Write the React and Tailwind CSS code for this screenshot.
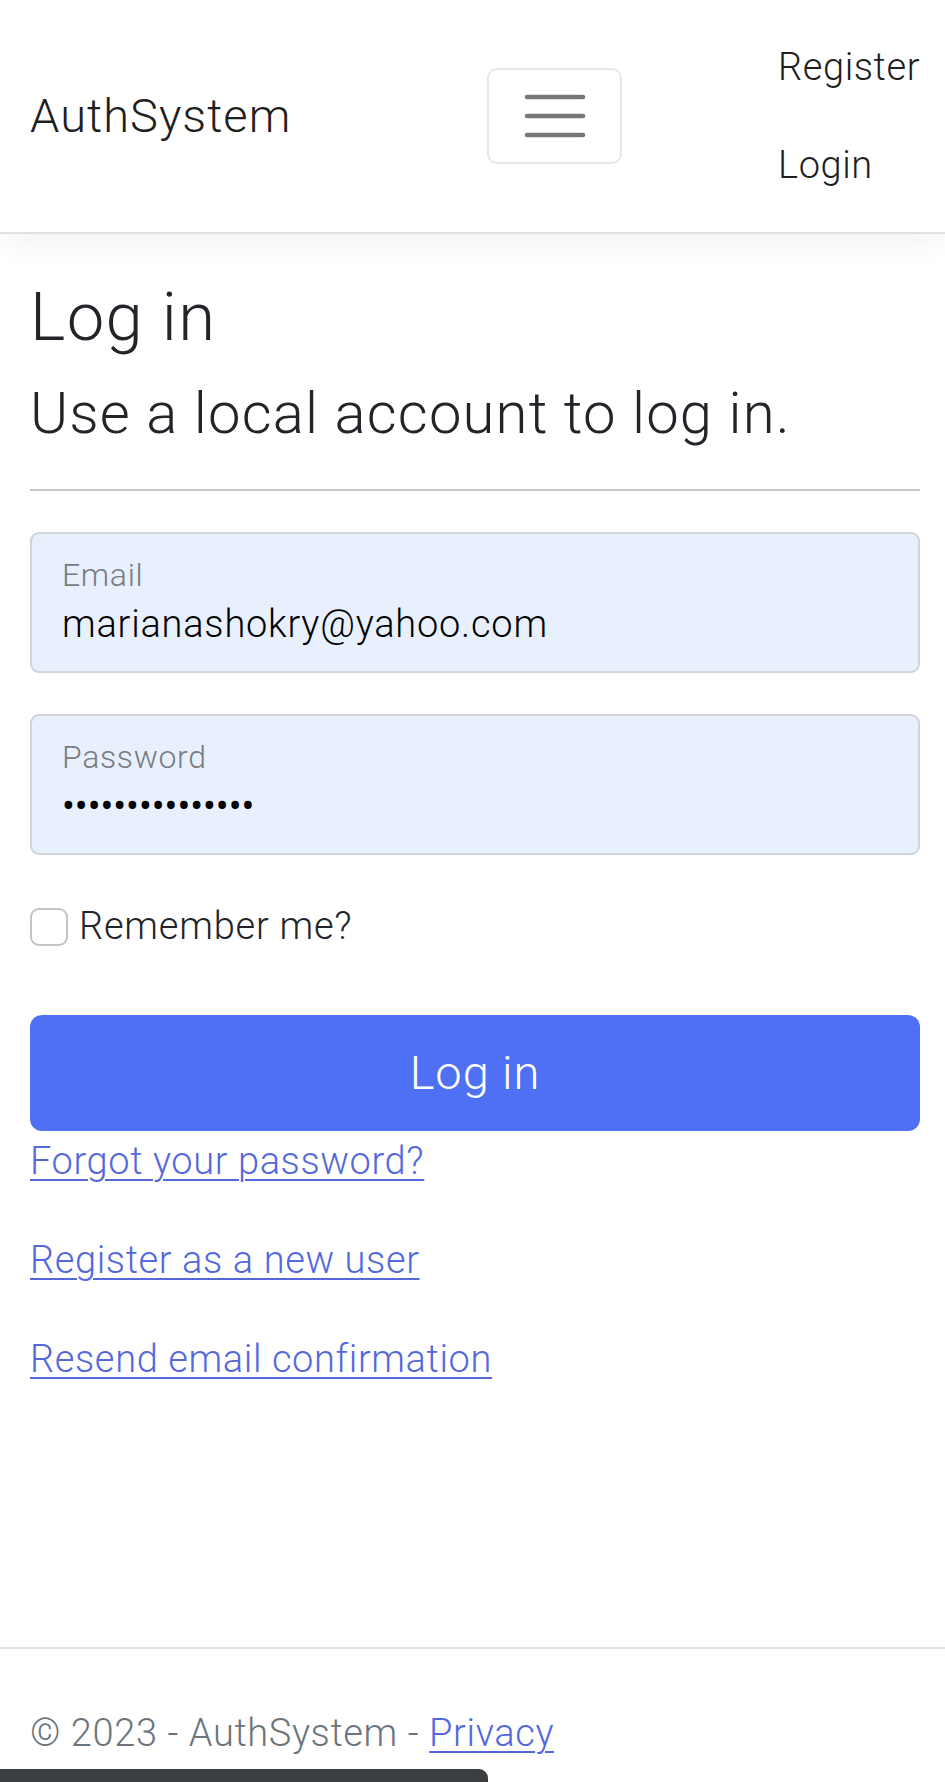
import React from 'react';

const font = { fontFamily: 'Roboto, "Noto Sans", Arial, sans-serif' };

const linkCls = 'text-[#5468dc] underline decoration-2 underline-offset-[5px]';

const Navbar = () => (
  <header className="relative z-10 bg-white border-b-2 border-[#dee2e6] shadow-[0_9px_28px_rgba(0,0,0,0.05)]">
    <div className="flex items-center pl-[30px] pr-[25px] py-[18px]">
      {/* Brand */}
      <a href="#" className="w-[457px] text-[47px] leading-[70px] tracking-[0.022em] text-[#1f1f1f] font-light">
        AuthSystem
      </a>

      {/* Toggler */}
      <button className="w-[135px] h-[96px] flex items-center justify-center border-2 border-[#e6e6e6] rounded-[10px] bg-white">
        <svg width="64" height="48" viewBox="0 0 64 48" className="block">
          <line x1="4" y1="5" x2="60" y2="5" stroke="#777" strokeWidth="4.5" strokeLinecap="round" />
          <line x1="4" y1="24" x2="60" y2="24" stroke="#777" strokeWidth="4.5" strokeLinecap="round" />
          <line x1="4" y1="43" x2="60" y2="43" stroke="#777" strokeWidth="4.5" strokeLinecap="round" />
        </svg>
      </button>

      {/* Nav links */}
      <ul className="ml-auto flex flex-col">
        <li className="py-[20.5px]">
          <a href="#" className="text-[38px] leading-[57px] tracking-[0.015em] text-[#1f1f1f] font-light">Register</a>
        </li>
        <li className="py-[20.5px]">
          <a href="#" className="text-[38px] leading-[57px] tracking-[0.015em] text-[#1f1f1f] font-light">Login</a>
        </li>
      </ul>
    </div>
  </header>
);

const Field = ({ label, children }) => (
  <div className="h-[141px] border-2 border-[#ced4da] rounded-[9px] bg-[#e8f0fe] px-[30px] pt-[22px]">
    <div className="text-[32px] leading-[38px] tracking-[0.02em] text-[#777c82] font-light">{label}</div>
    <div className="mt-[8px] text-[38px] leading-[45px] text-black font-normal">{children}</div>
  </div>
);

export default function App() {
  return (
    <div className="relative h-[1782px] overflow-hidden bg-white flex flex-col font-light" style={font}>
      <Navbar />

      <main className="flex-1 pl-[30px] pr-[25px] pt-[43px] text-[#212529]">
        <h1 className="text-[67px] leading-[80px] mb-[21px] tracking-[0.02em] font-light">Log in</h1>
        <h2 className="text-[58px] leading-[70px] tracking-[0.02em] font-light">Use a local account to log in.</h2>
        <hr className="mt-[41px] border-0 border-t-2 border-[#c8c9ca]" />

        <form className="mt-[41px]" onSubmit={(e) => e.preventDefault()}>
          <Field label="Email">
            <span className="font-light tracking-[0.02em]">marianashokry@yahoo.com</span>
          </Field>

          <div className="mt-[41px]">
            <Field label="Password">
              <span>•••••••••••••••</span>
            </Field>
          </div>

          <label className="mt-[43px] h-[57px] flex items-center gap-[11px]">
            <span className="w-[38px] h-[38px] border-2 border-[#c4c4c4] rounded-[9px] bg-white shrink-0"></span>
            <span className="text-[38px] leading-[57px] tracking-[0.02em] text-[#212529] font-light">Remember me?</span>
          </label>

          <button
            type="submit"
            className="mt-[60px] w-full h-[116px] rounded-[12px] bg-[#5070f3] text-white text-[47px] tracking-[0.02em] font-light"
          >
            Log in
          </button>

          <div className="mt-[2px] text-[38px] leading-[57px] tracking-[0.016em]">
            <p className="mb-[42px]">
              <a href="#" className={linkCls}>Forgot your password?</a>
            </p>
            <p className="mb-[42px]">
              <a href="#" className={linkCls}>Register as a new user</a>
            </p>
            <p className="mb-[42px]">
              <a href="#" className={linkCls}>Resend email confirmation</a>
            </p>
          </div>
        </form>
      </main>

      <footer className="h-[135px] border-t-2 border-[#dee2e6] pl-[30px] pt-[56px]">
        <p className="text-[38px] leading-[57px] tracking-[0.016em] text-[#6c757d] font-light">
          © 2023 - AuthSystem - <a href="#" className={linkCls}>Privacy</a>
        </p>
      </footer>

      <div className="absolute left-0 bottom-0 w-[488px] h-[13px] bg-[#3c3f42] rounded-tr-[9px]"></div>
    </div>
  );
}
